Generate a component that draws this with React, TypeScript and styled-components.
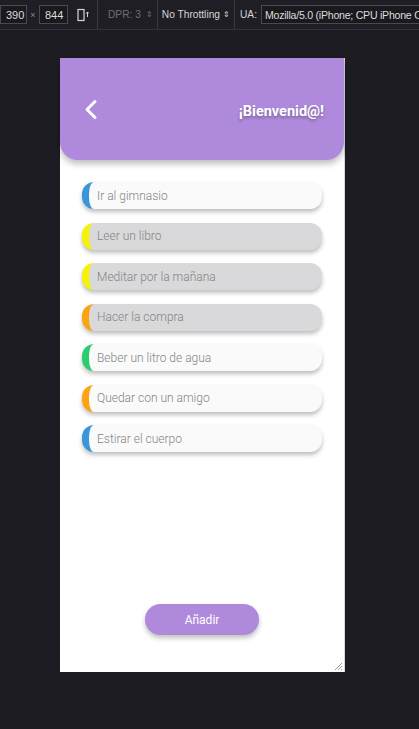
import React from "react";
import styled, { createGlobalStyle } from "styled-components";

const Global = createGlobalStyle`
  html, body { margin: 0; padding: 0; background: #1d1c22; }
  body { width: 419px; height: 729px; overflow: hidden; font-family: "Liberation Sans", Arial, sans-serif; }
`;

const Toolbar = styled.div`
  height: 29px;
  border-bottom: 1px solid #34333a;
  background: #1f1e24;
  display: flex;
  align-items: center;
  font-size: 10.2px;
  color: #d6d6d6;
  white-space: nowrap;
  overflow: hidden;
`;

const DimInput = styled.div<{ $w: number }>`
  width: ${(p) => p.$w}px;
  height: 19px;
  box-sizing: border-box;
  border: 1px solid #4a4950;
  background: #1a191e;
  display: flex;
  align-items: center;
  padding-left: 5px;
  font-size: 11px;
  color: #dcdcdc;
  flex-shrink: 0;
`;

const Times = styled.span`
  color: #8a8a8f;
  font-size: 9px;
  width: 12px;
  text-align: center;
  flex-shrink: 0;
`;

const Sep = styled.div<{ $ml: number; $mr: number }>`
  width: 1px;
  height: 29px;
  background: #3a3940;
  margin: 0 ${(p) => p.$mr}px 0 ${(p) => p.$ml}px;
  flex-shrink: 0;
`;

const Muted = styled.span`
  color: #6f6e75;
  display: flex;
  align-items: center;
  gap: 5px;
  flex-shrink: 0;
`;

const Label = styled.span`
  display: flex;
  align-items: center;
  gap: 3px;
  flex-shrink: 0;
`;

const Arrows = styled.span`
  font-size: 8px;
`;

const UAInput = styled.div`
  flex: 1;
  height: 19px;
  box-sizing: border-box;
  border: 1px solid #4a4950;
  border-right: none;
  background: #1a191e;
  display: flex;
  align-items: center;
  padding-left: 3px;
  margin-left: 4px;
  color: #dcdcdc;
  font-size: 10.6px;
  letter-spacing: -0.25px;
  overflow: hidden;
  min-width: 0;
`;

const Stage = styled.div`
  padding: 28px 0 0 60px;
`;

const Phone = styled.div`
  position: relative;
  width: 284px;
  height: 614px;
  background: #ffffff;
  box-shadow: 1px 0 0 #d8d8d8;
  display: flex;
  flex-direction: column;
  font-family: Roboto, "Noto Sans", sans-serif;
`;

const Header = styled.header`
  height: 102px;
  flex-shrink: 0;
  background: #af89db;
  border-radius: 0 0 18px 18px;
  box-shadow: 0 4px 6px rgba(0, 0, 0, 0.25);
  display: flex;
  align-items: center;
  justify-content: space-between;
  padding: 0 20px 0 24px;
  box-sizing: border-box;
`;

const Title = styled.h1`
  margin: 4px 0 0;
  font-size: 14.5px;
  font-weight: 700;
  color: #ffffff;
  text-shadow: 0 2px 3px rgba(0, 0, 0, 0.3);
`;

const List = styled.div`
  margin-top: 22px;
  padding: 0 22px;
  display: flex;
  flex-direction: column;
  gap: 13.5px;
`;

const Item = styled.div<{ $accent: string; $muted?: boolean }>`
  height: 27px;
  box-sizing: border-box;
  border-radius: 12px;
  border-left: 7px solid ${(p) => p.$accent};
  background: ${(p) => (p.$muted ? "#d9d8da" : "#fafafa")};
  box-shadow: 0 3px 4px rgba(0, 0, 0, 0.25);
  display: flex;
  align-items: center;
  padding-left: 8px;
  font-size: 12px;
  font-weight: 300;
  color: #858585;
`;

const Footer = styled.div`
  margin-top: auto;
  margin-bottom: 37px;
  display: flex;
  justify-content: center;
`;

const AddButton = styled.button`
  width: 114px;
  height: 31px;
  border: none;
  border-radius: 16px;
  background: #af89db;
  color: #ffffff;
  font-family: Roboto, "Noto Sans", sans-serif;
  font-size: 12px;
  font-weight: 400;
  box-shadow: 0 3px 5px rgba(0, 0, 0, 0.25);
  padding: 0;
`;

const Grip = styled.svg`
  position: absolute;
  right: 1px;
  bottom: 1px;
`;

const tasks = [
  { text: "Ir al gimnasio", color: "#3a96db" },
  { text: "Leer un libro", color: "#f6f200", muted: true },
  { text: "Meditar por la mañana", color: "#f6f200", muted: true },
  { text: "Hacer la compra", color: "#fca311", muted: true },
  { text: "Beber un litro de agua", color: "#2ecc71" },
  { text: "Quedar con un amigo", color: "#fca311" },
  { text: "Estirar el cuerpo", color: "#3a96db" },
];

export default function App() {
  return (
    <>
      <Global />
      <Toolbar>
        <DimInput $w={27}>390</DimInput>
        <Times>×</Times>
        <DimInput $w={29}>844</DimInput>
        <svg width="12" height="14" viewBox="0 0 12 14" style={{ marginLeft: 9, flexShrink: 0 }}>
          <rect x="1" y="1.5" width="6" height="11" fill="none" stroke="#d6d6d6" strokeWidth="1.2" />
          <path d="M9 5.5 L10.5 4 L12 5.5 M10.5 4 V9" fill="none" stroke="#d6d6d6" strokeWidth="1" />
        </svg>
        <Sep $ml={8} $mr={10} />
        <Muted>
          DPR: 3 <Arrows>⇕</Arrows>
        </Muted>
        <Sep $ml={4} $mr={4} />
        <Label>
          No Throttling <Arrows>⇕</Arrows>
        </Label>
        <Sep $ml={4} $mr={5} />
        <Label>UA:</Label>
        <UAInput>Mozilla/5.0 (iPhone; CPU iPhone OS 14_</UAInput>
      </Toolbar>
      <Stage>
        <Phone>
          <Header>
            <svg width="14" height="21" viewBox="0 0 14 21">
              <polyline
                points="11,2.5 3,10.5 11,18.5"
                fill="none"
                stroke="#ffffff"
                strokeWidth="3"
                strokeLinecap="round"
                strokeLinejoin="round"
              />
            </svg>
            <Title>¡Bienvenid@!</Title>
          </Header>
          <List>
            {tasks.map((t) => (
              <Item key={t.text} $accent={t.color} $muted={t.muted}>
                {t.text}
              </Item>
            ))}
          </List>
          <Footer>
            <AddButton>Añadir</AddButton>
          </Footer>
          <Grip width="10" height="10" viewBox="0 0 10 10">
            <path d="M9 2 L2 9 M9 5 L5 9 M9 8 L8 9" stroke="#9a9a9a" strokeWidth="1" />
          </Grip>
        </Phone>
      </Stage>
    </>
  );
}
